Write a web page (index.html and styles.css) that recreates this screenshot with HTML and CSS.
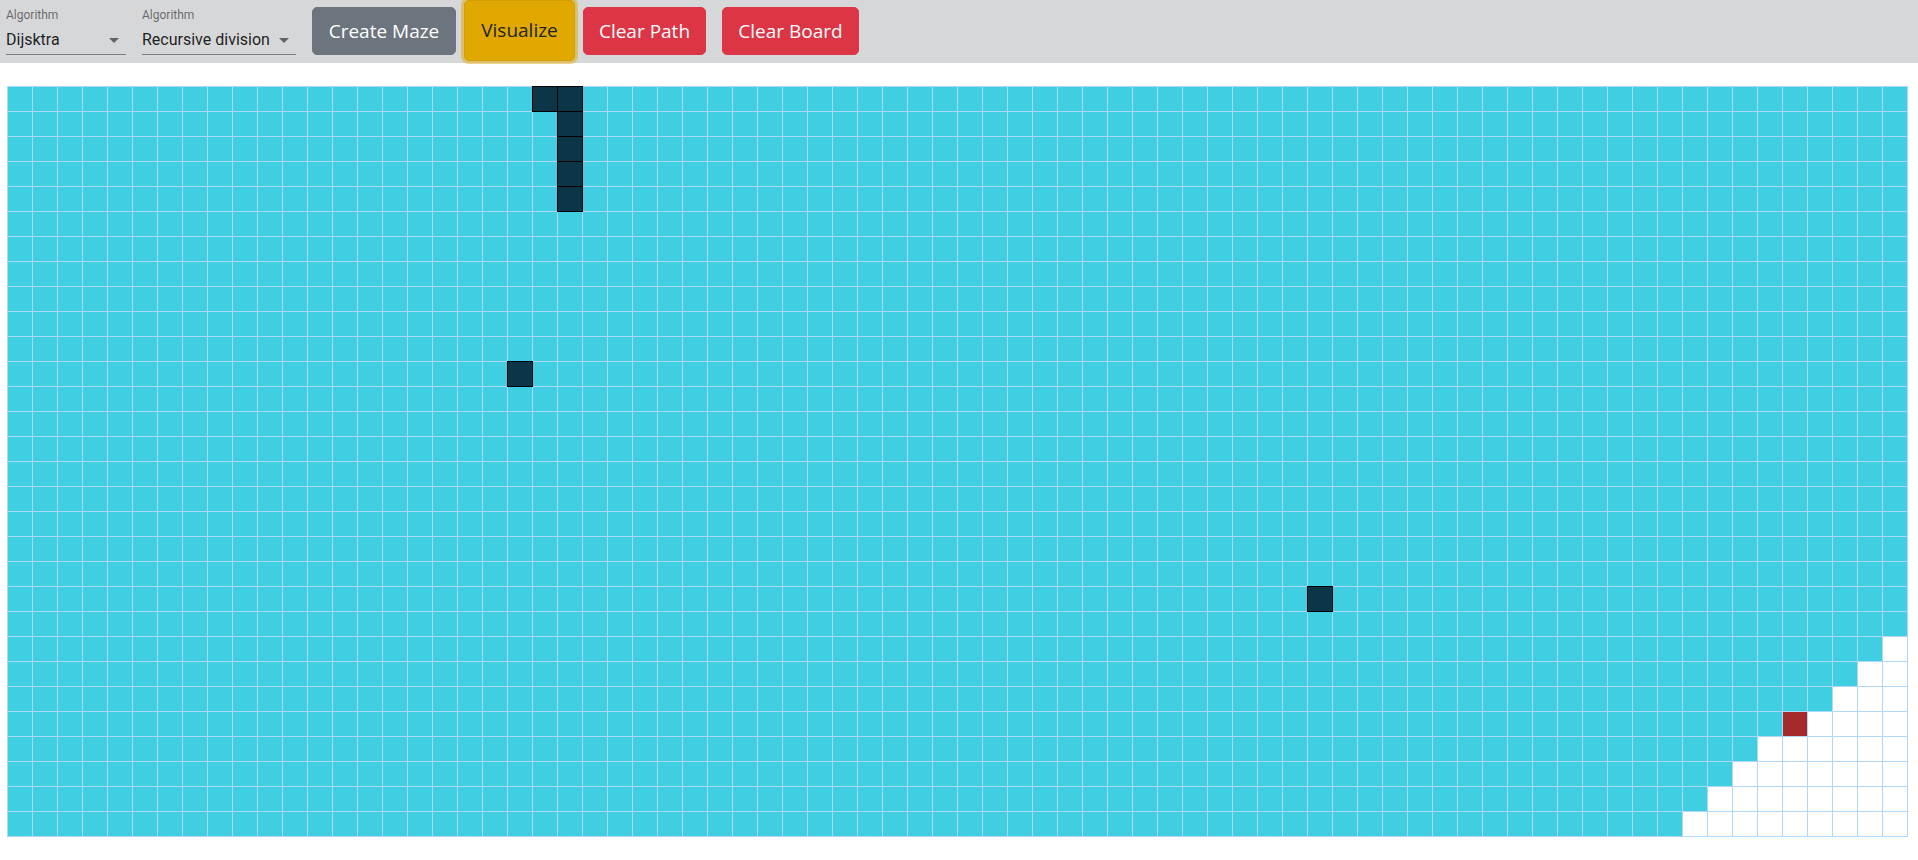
FILE: index.html
```html
<!DOCTYPE html>
<html lang="en">
<head>
<meta charset="utf-8">
<title>Pathfinding Visualizer</title>
<link rel="stylesheet" href="styles.css">
</head>
<body>
<div class="toolbar">
  <div class="select select-algo">
    <label class="select-label">Algorithm</label>
    <div class="select-input">Dijsktra
      <svg class="select-arrow" viewBox="0 0 24 24" width="24" height="24"><path d="M7 10l5 5 5-5z"/></svg>
    </div>
  </div>
  <div class="select select-maze">
    <label class="select-label">Algorithm</label>
    <div class="select-input">Recursive division
      <svg class="select-arrow" viewBox="0 0 24 24" width="24" height="24"><path d="M7 10l5 5 5-5z"/></svg>
    </div>
  </div>
  <button class="btn btn-secondary btn-create">Create Maze</button>
  <button class="btn btn-warning btn-visualize">Visualize</button>
  <button class="btn btn-danger btn-clear-path">Clear Path</button>
  <button class="btn btn-danger btn-clear-board">Clear Board</button>
</div>
<div class="grid" id="grid"></div>
<script src="script.js"></script>
</body>
</html>
```
FILE: styles.css
```css
html, body {
  margin: 0;
  padding: 0;
  background: #ffffff;
  font-family: Roboto, "Liberation Sans", sans-serif;
}

.toolbar {
  display: flex;
  align-items: flex-start;
  height: 63px;
  background: #d6d7d9;
  padding-left: 6px;
}

.select {
  position: relative;
  margin: 8px 16px 0 0;
  padding-top: 16px;
}

.select-algo { width: 120px; }
.select-maze { width: 154px; }

.select-label {
  position: absolute;
  top: 0;
  left: 0;
  font-size: 12px;
  line-height: 14px;
  color: rgba(0, 0, 0, 0.54);
}

.select-input {
  position: relative;
  box-sizing: border-box;
  height: 31px;
  padding: 6px 24px 6px 0;
  font-size: 16px;
  line-height: 19px;
  color: rgba(0, 0, 0, 0.87);
  border-bottom: 1px solid rgba(0, 0, 0, 0.42);
  white-space: nowrap;
}

.select-arrow {
  position: absolute;
  right: 0;
  top: 4px;
  fill: rgba(0, 0, 0, 0.54);
}

.btn {
  box-sizing: border-box;
  height: 48px;
  margin-top: 7px;
  padding: 0;
  border: 1px solid transparent;
  border-radius: 5px;
  font-family: "Open Sans", "Noto Sans", sans-serif;
  font-size: 19px;
  line-height: 1.5;
  text-align: center;
  color: #ffffff;
  cursor: pointer;
}

.btn-secondary {
  background: #6c757d;
  border-color: #6c757d;
}

.btn-warning {
  background: #e0a800;
  border-color: #d39e00;
  color: #212529;
}

.btn-danger {
  background: #dc3545;
  border-color: #dc3545;
}

.btn-create { width: 144px; }

.btn-visualize {
  width: 111px;
  height: 61px;
  margin-top: 0;
  margin-left: 8px;
  box-shadow: 0 0 0 3px rgba(222, 170, 12, 0.5);
}

.btn-clear-path {
  width: 123px;
  margin-left: 8px;
}

.btn-clear-board {
  width: 137px;
  margin-left: 16px;
}

.grid {
  display: grid;
  grid-template-columns: repeat(76, 24px);
  grid-auto-rows: 24px;
  gap: 1px;
  padding: 1px;
  width: max-content;
  margin: 23px 0 0 7px;
  background: rgb(175, 216, 248);
}

.cell {
  background: #40cee3;
}

.cell-unvisited {
  background: #ffffff;
}

.cell-wall {
  background: rgb(12, 53, 71);
  outline: 1px solid #000000;
}

.cell-target {
  background: #a52a2a;
}
```
FILE: script.js
```js
(function () {
  var grid = document.getElementById('grid');
  var walls = {
    '0,21': 1, '0,22': 1, '1,22': 1, '2,22': 1, '3,22': 1, '4,22': 1,
    '11,20': 1, '20,52': 1
  };
  var frag = document.createDocumentFragment();
  for (var r = 0; r < 30; r++) {
    for (var c = 0; c < 76; c++) {
      var d = document.createElement('div');
      var cls = 'cell';
      if (walls[r + ',' + c]) {
        cls += ' cell-wall';
      } else if (r === 25 && c === 71) {
        cls += ' cell-target';
      } else if ((r >= 22 && r <= 25 && c >= 97 - r) || (r >= 26 && c >= 96 - r)) {
        cls += ' cell-unvisited';
      }
      d.className = cls;
      frag.appendChild(d);
    }
  }
  grid.appendChild(frag);
})();
```
